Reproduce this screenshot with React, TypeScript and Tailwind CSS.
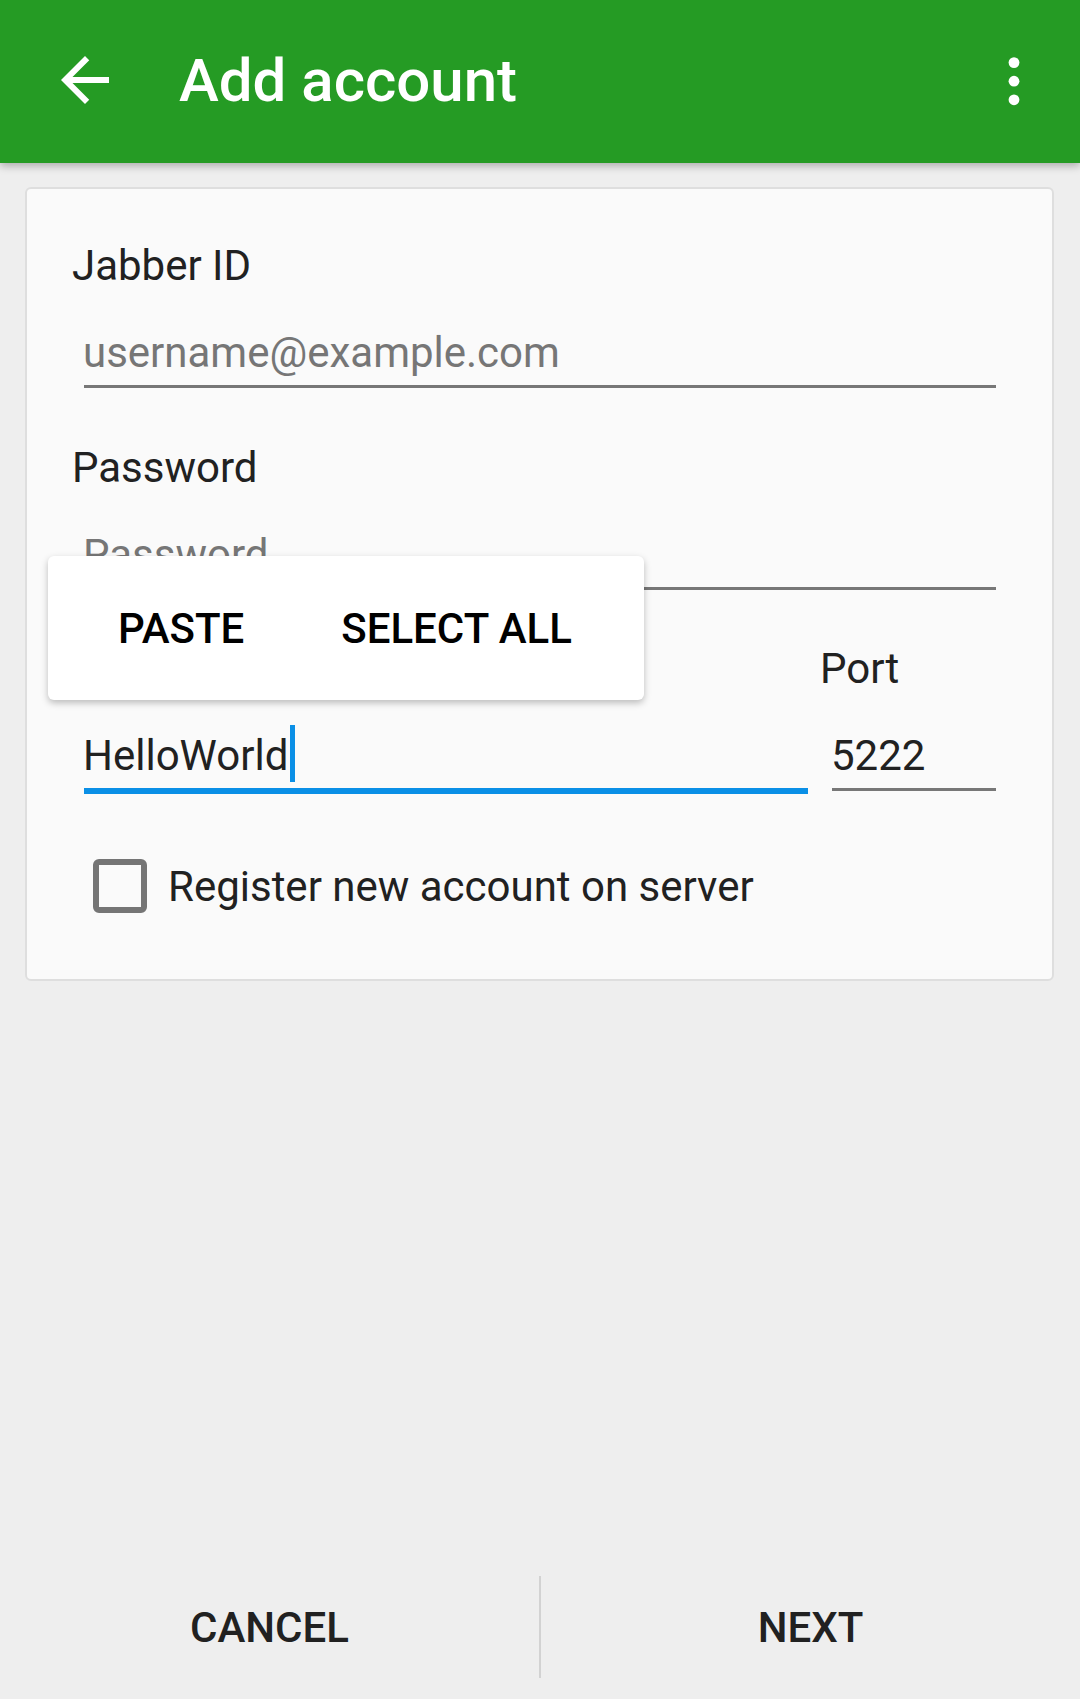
import React from "react";

const ArrowBack = () => (
  <svg viewBox="0 0 24 24" className="w-[72px] h-[72px]" fill="#ffffff">
    <path d="M20 11H7.83l5.59-5.59L12 4l-8 8 8 8 1.41-1.41L7.83 13H20v-2z" />
  </svg>
);

const MoreVert = () => (
  <svg viewBox="0 0 24 24" className="w-[72px] h-[72px]" fill="#ffffff">
    <circle cx="12" cy="6.2" r="1.8" />
    <circle cx="12" cy="12.4" r="1.8" />
    <circle cx="12" cy="18.6" r="1.8" />
  </svg>
);

// label + underlined text field, as in the Android form
const Field = ({
  label,
  value,
  placeholder,
  focused,
  hideLabel,
  className = "",
}: {
  label: string;
  value?: string;
  placeholder?: string;
  focused?: boolean;
  hideLabel?: boolean;
  className?: string;
}) => (
  <div className={className}>
    <div className={`h-[49px] leading-[49px] text-[#212121] ${hideLabel ? "invisible" : ""}`}>{label}</div>
    <div className="mt-[38px] ml-[12px] relative">
      <div className="h-[49px] leading-[49px] -ml-[1px] whitespace-nowrap">
        {value ? (
          <span className="text-[#212121]">{value}</span>
        ) : (
          <span className="text-[#767676]">{placeholder}</span>
        )}
        {focused && (
          <span className="inline-block align-top relative -top-[6px] ml-[2px] w-[5px] h-[57px] bg-[#0a8fe6]" />
        )}
      </div>
      <div className="mt-[8px] h-[6px]">
        <div className={focused ? "h-[6px] bg-[#0a8fe6]" : "h-[3px] bg-[#777777]"} />
      </div>
    </div>
  </div>
);

export default function App() {
  return (
    <div className="relative w-[1080px] h-[1699px] bg-[#eeeeee] flex flex-col font-[Roboto,sans-serif] text-[42px] overflow-hidden">
      {/* APP BAR */}
      <header className="relative z-10 h-[163px] bg-[#259b24] flex items-center pb-1 pl-[49px] pr-[30px] shadow-[0_3px_8px_rgba(0,0,0,0.28)]">
        <ArrowBack />
        <h1 className="ml-[58px] text-[60px] font-medium text-white leading-[70px] mt-[3px]">Add account</h1>
        <div className="ml-auto">
          <MoreVert />
        </div>
      </header>

      {/* FORM CARD */}
      <main className="flex-1">
        <div className="mt-[24px] ml-[25px] mr-[26px] bg-[#fafafa] border-2 border-[#dedede] rounded-[6px] pl-[45px] pr-[56px] pt-[52px] pb-[66px]">
          <Field label="Jabber ID" placeholder="username@example.com" />
          <Field label="Password" placeholder="Password" className="mt-[52px]" />

          <div className="mt-[51px] flex gap-[12px]">
            {/* hostname label sits under the selection popup */}
            <Field label="Hostname" value="HelloWorld" focused hideLabel className="flex-1" />
            <Field label="Port" value="5222" className="w-[176px]" />
          </div>

          <div className="mt-[65px] ml-[21px] flex items-center">
            <div className="w-[54px] h-[54px] border-[6px] border-[#757575] rounded-[6px]" />
            <span className="ml-[21px] h-[49px] leading-[49px] text-[#212121]">Register new account on server</span>
          </div>
        </div>
      </main>

      {/* BOTTOM BUTTONS */}
      <footer className="h-[144px] flex">
        <button className="flex-1 flex items-center justify-center font-medium text-[#212121] leading-[49px]">CANCEL</button>
        <div className="w-[2px] my-[21px] bg-[#d2d2d2]" />
        <button className="flex-1 flex items-center justify-center font-medium text-[#212121] leading-[49px]">NEXT</button>
      </footer>

      {/* TEXT SELECTION POPUP */}
      <div className="absolute left-[48px] top-[556px] w-[596px] h-[144px] bg-white rounded-[6px] shadow-[0_3px_7px_rgba(0,0,0,0.25)] flex items-center pl-[70px] gap-[97px] z-20">
        <span className="font-medium text-black leading-[49px]">PASTE</span>
        <span className="font-medium text-black leading-[49px]">SELECT ALL</span>
      </div>
    </div>
  );
}
